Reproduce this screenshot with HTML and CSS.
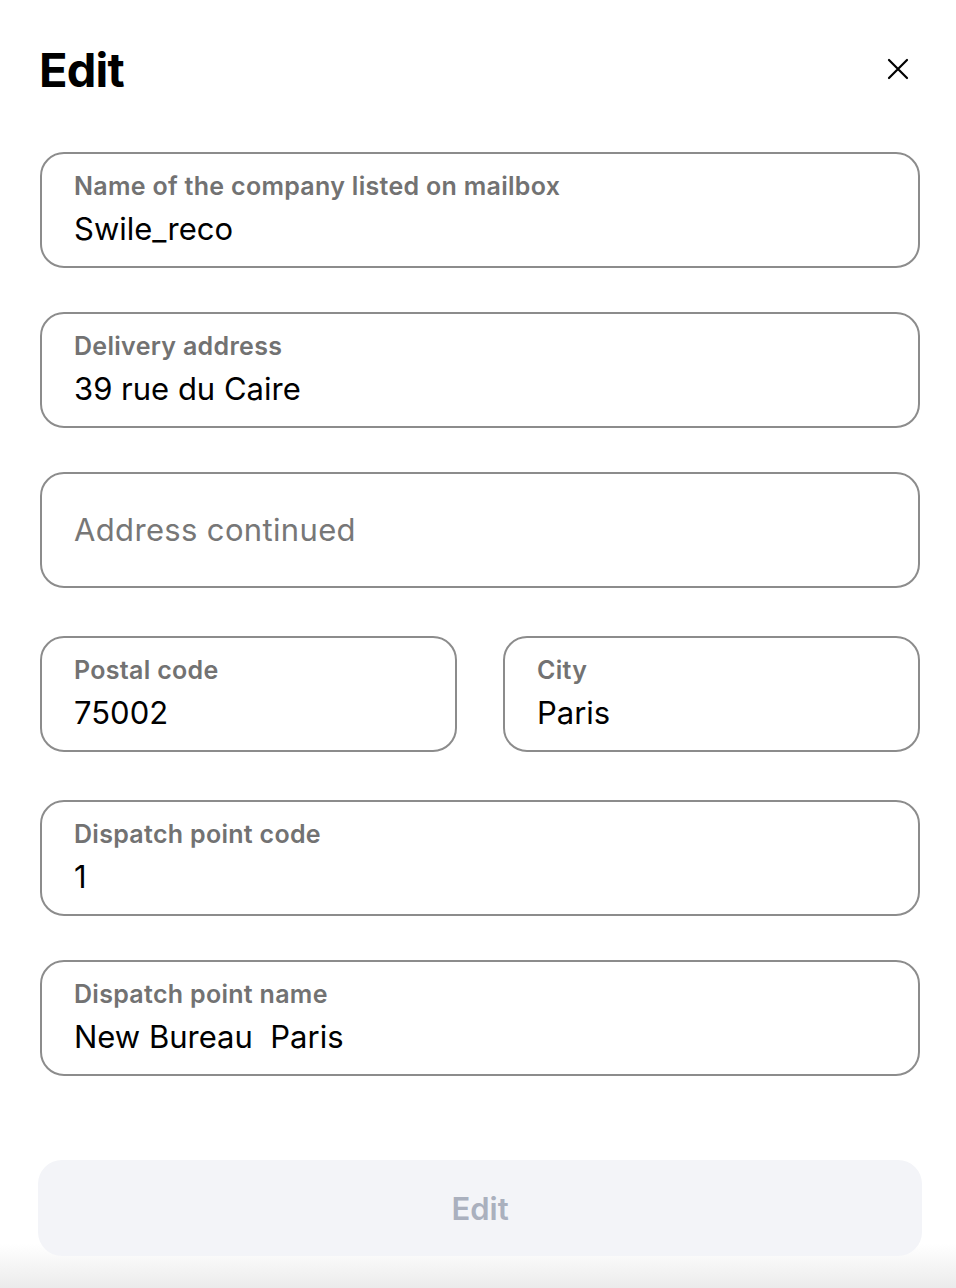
FILE: index.html
```html
<!DOCTYPE html>
<html lang="en">
<head>
<meta charset="utf-8">
<title>Edit</title>
<link rel="stylesheet" href="styles.css">
</head>
<body>
<div class="modal">
  <header class="modal-header">
    <h1 class="title">Edit</h1>
    <button class="close" aria-label="Close">
      <svg width="22" height="22" viewBox="0 0 22 22"><path d="M2 2 L20 20 M20 2 L2 20" stroke="#000" stroke-width="2.2" stroke-linecap="round" fill="none"/></svg>
    </button>
  </header>
  <form class="form">
    <div class="field">
      <span class="label">Name of the company listed on mailbox</span>
      <span class="value">Swile_reco</span>
    </div>
    <div class="field">
      <span class="label">Delivery address</span>
      <span class="value">39 rue du Caire</span>
    </div>
    <div class="field field-empty">
      <span class="placeholder">Address continued</span>
    </div>
    <div class="row">
      <div class="field">
        <span class="label">Postal code</span>
        <span class="value">75002</span>
      </div>
      <div class="field">
        <span class="label">City</span>
        <span class="value">Paris</span>
      </div>
    </div>
    <div class="field">
      <span class="label">Dispatch point code</span>
      <span class="value">1</span>
    </div>
    <div class="field">
      <span class="label">Dispatch point name</span>
      <span class="value">New Bureau&nbsp; Paris</span>
    </div>
  </form>
  <div class="footer">
    <button class="submit" disabled>Edit</button>
  </div>
</div>
</body>
</html>
```

FILE: styles.css
```css
* { box-sizing: border-box; }
html, body {
  margin: 0;
  padding: 0;
  background: #fff;
  font-family: "Inter", "Roboto", sans-serif;
  color: #000;
}
.modal {
  width: 956px;
  height: 1288px;
  padding: 0 36px 0 40px;
  display: flex;
  flex-direction: column;
  position: relative;
  background: linear-gradient(to bottom, #fff 0, #fff 1244px, #f6f6f6 1264px, #ebebeb 1288px);
}
.modal-header {
  display: flex;
  justify-content: space-between;
  align-items: center;
  height: 140px;
  padding-bottom: 2px;
}
.title {
  margin: 0;
  font-size: 47px;
  font-weight: 700;
  letter-spacing: -0.8px;
  margin-left: -1px;
}
.close {
  background: none;
  border: 0;
  padding: 0;
  margin-right: 11px;
  width: 22px;
  height: 22px;
  display: flex;
}
.form {
  display: flex;
  flex-direction: column;
  gap: 44px;
  margin-top: 12px;
  width: 880px;
}
.row {
  display: grid;
  grid-template-columns: 1fr 1fr;
  gap: 46px;
  margin-top: 4px;
  margin-bottom: 4px;
}
.field {
  height: 116px;
  border: 2px solid #8c8c8c;
  border-radius: 24px;
  padding: 17px 32px 0;
  display: flex;
  flex-direction: column;
}
.label {
  font-size: 25px;
  font-weight: 600;
  color: #727272;
  line-height: 30px;
  letter-spacing: 0.3px;
}
.value {
  font-size: 31px;
  line-height: 40px;
  margin-top: 8px;
  color: #000;
}
.field-empty {
  justify-content: center;
  padding-top: 0;
}
.placeholder {
  font-size: 31px;
  color: #777;
  line-height: 40px;
  letter-spacing: 0.35px;
}
.footer {
  margin-top: auto;
  padding-bottom: 32px;
  margin-left: -2px;
}
.submit {
  width: 884px;
  height: 96px;
  border: 0;
  border-radius: 24px;
  background: #f3f4f8;
  color: #aab0be;
  font-family: inherit;
  font-size: 31px;
  font-weight: 600;
}
```
